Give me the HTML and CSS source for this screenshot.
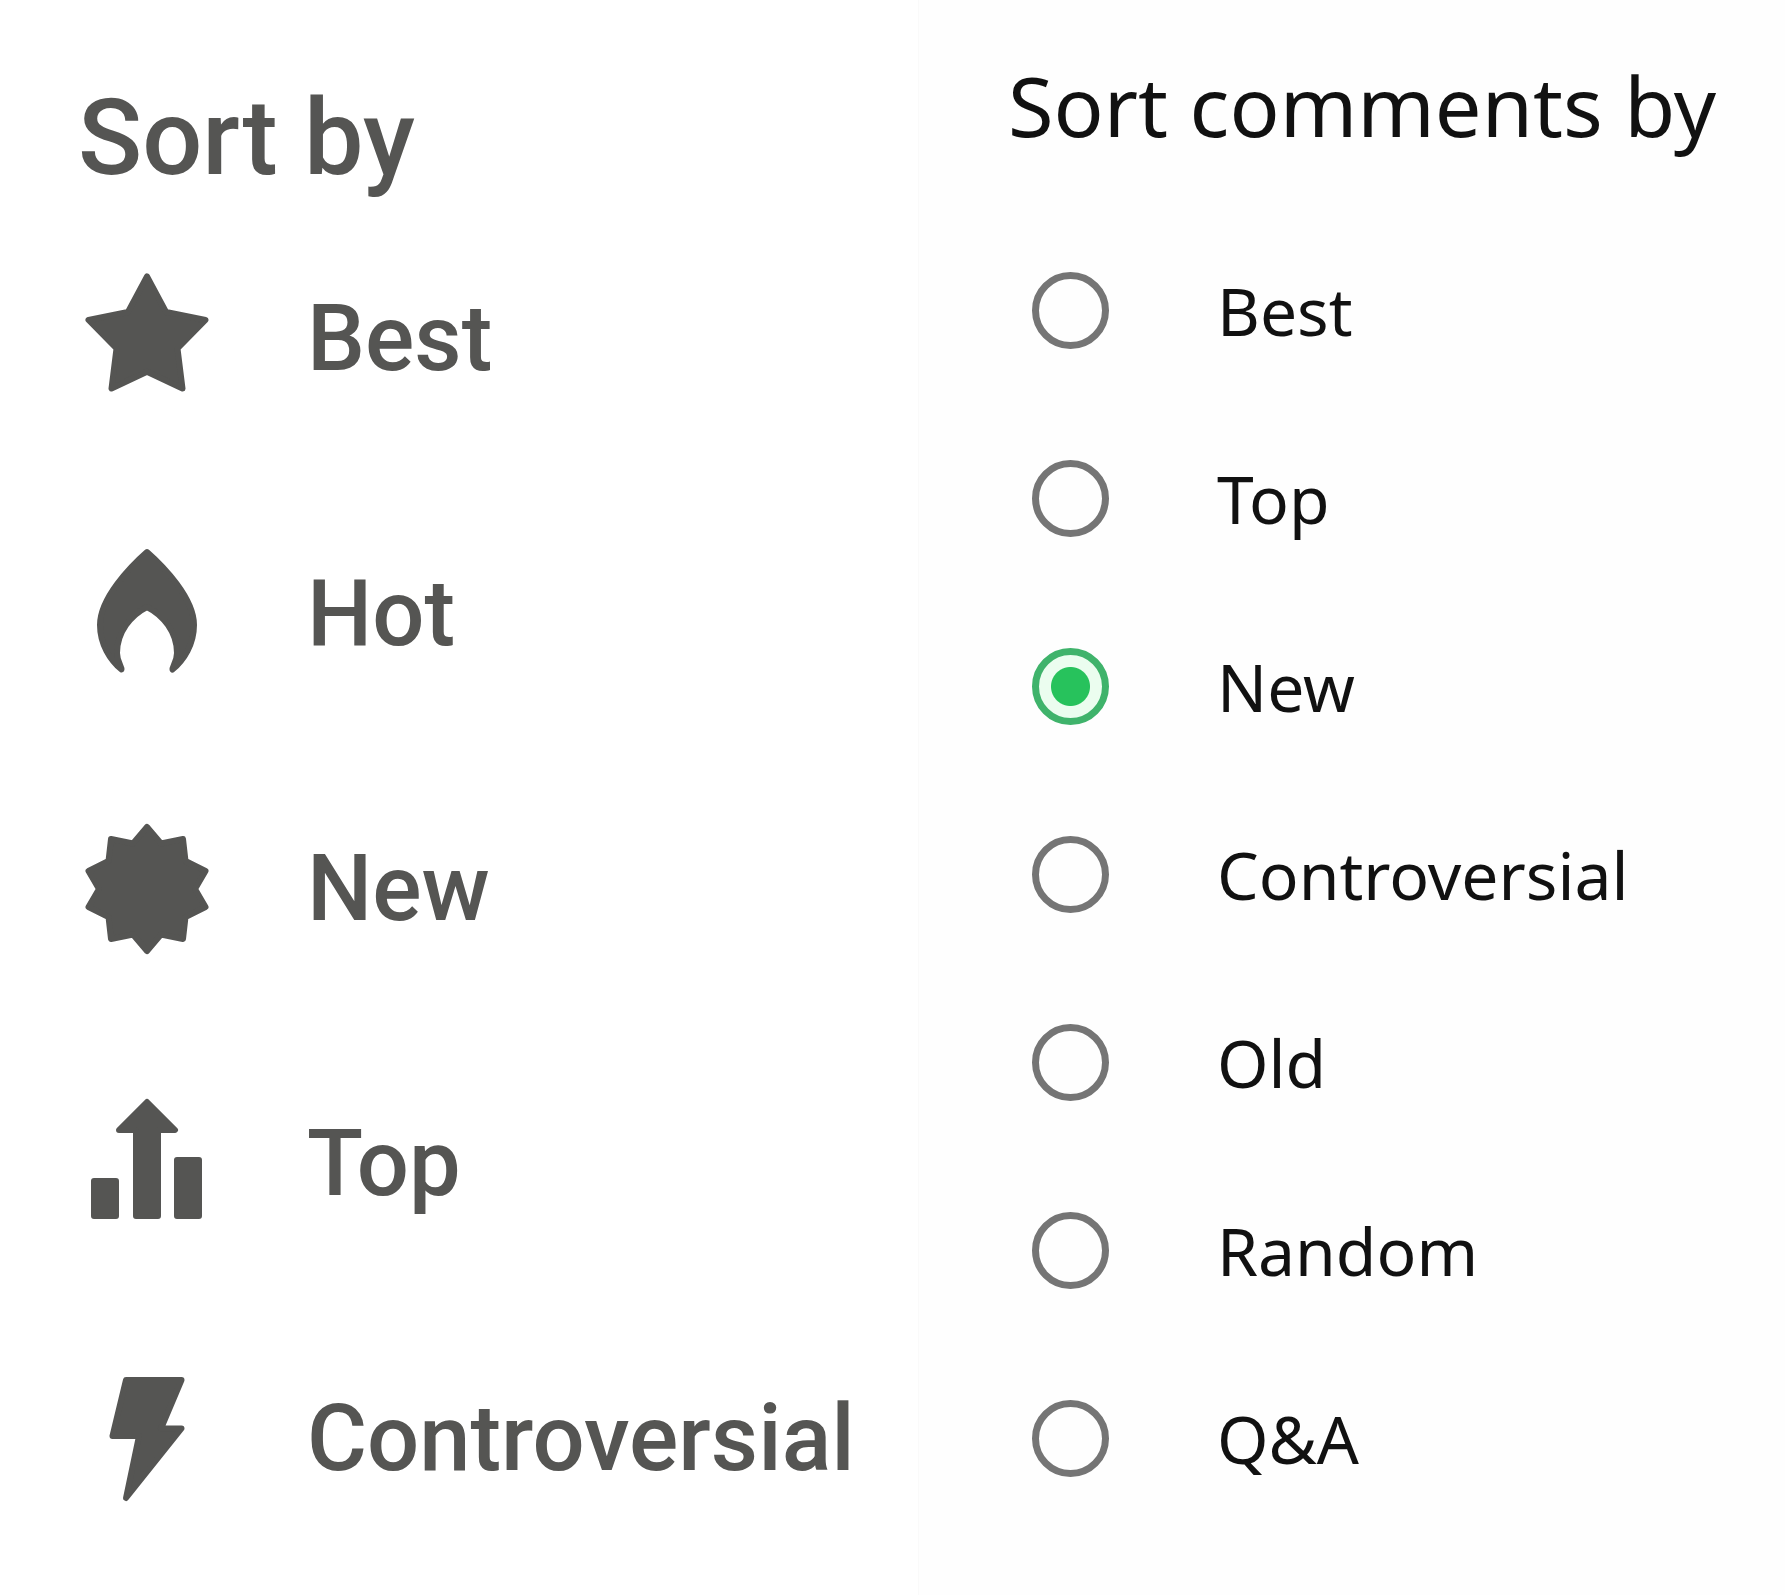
FILE: index.html
```html
<!DOCTYPE html>
<html lang="en">
<head>
  <meta charset="UTF-8" />
  <meta name="viewport" content="width=device-width, initial-scale=1.0"/>
  <title>Sort options</title>
  <link rel="stylesheet" href="styles.css">
</head>
<body>

  <section class="panel posts">
    <h2>Sort by</h2>
    <ul>
      <li>
        <button type="button">
          <svg class="icon" viewBox="0 0 132 132" aria-hidden="true">
            <path d="M66 3.5 85 39 124.5 47 96.5 75.5 101.5 115.5 66 98.7 30.5 115.5 35.5 75.5 7.5 47 47 39Z"/>
          </svg>
          Best
        </button>
      </li>
      <li>
        <button type="button">
          <svg class="icon" viewBox="0 0 132 132" aria-hidden="true">
            <path d="M66 4C82 18 113 50 113 77C113 96 103 112 91.5 121.5C91 119 96 114 96 105C96 84 82 67 66 59C50 67 36 84 36 105C36 114 41 119 40.5 121.5C29 112 19 96 19 77C19 50 50 18 66 4Z"/>
          </svg>
          Hot
        </button>
      </li>
      <li>
        <button type="button">
          <svg class="icon" viewBox="0 0 132 132" aria-hidden="true">
            <path d="M66 4 80 20.5 102 16 104.5 38 124.5 48 114 66 124.5 84 104.5 94 102 116 80 111.5 66 128 52 111.5 30 116 27.5 94 7.5 84 18 66 7.5 48 27.5 38 30 16 52 20.5Z"/>
          </svg>
          New
        </button>
      </li>
      <li>
        <button type="button">
          <svg class="icon" viewBox="0 0 132 132" aria-hidden="true">
            <path d="M13 83H35V118H13ZM96 62H118V118H96ZM66 4 94 32H77V118H55V32H38Z"/>
          </svg>
          Top
        </button>
      </li>
      <li>
        <button type="button">
          <svg class="icon" viewBox="0 0 132 132" aria-hidden="true">
            <path d="M45 7H100.5L80 55.5H100.5L45 125L58 63H31.5Z"/>
          </svg>
          Controversial
        </button>
      </li>
    </ul>
  </section>

  <form class="panel comments">
    <h2 id="comments-title">Sort comments by</h2>
    <div class="options" role="radiogroup" aria-labelledby="comments-title">
      <label><input type="radio" name="sort" value="best">Best</label>
      <label><input type="radio" name="sort" value="top">Top</label>
      <label><input type="radio" name="sort" value="new" checked>New</label>
      <label><input type="radio" name="sort" value="controversial">Controversial</label>
      <label><input type="radio" name="sort" value="old">Old</label>
      <label><input type="radio" name="sort" value="random">Random</label>
      <label><input type="radio" name="sort" value="qa">Q&amp;A</label>
    </div>
  </form>

</body>
</html>
```

FILE: styles.css
```css
* {
  box-sizing: border-box;
}
body {
  margin: 0;
  min-height: 100vh;
  display: grid;
  grid-template-columns: 918fr 867fr;
  background: #fff;
}
h2, ul {
  margin: 0;
  padding: 0;
}

/* post sorting */
.posts {
  padding-top: 78px;
  color: #555553;
  font-family: Roboto, sans-serif;
}
.posts h2 {
  padding-left: 78px;
  margin-bottom: 3px;
  font-size: 106px;
  font-weight: 500;
  line-height: 120px;
}
.posts ul {
  list-style: none;
}
.posts button {
  display: flex;
  align-items: center;
  gap: 94px;
  width: 100%;
  height: 275px;
  padding: 0 0 0 81px;
  border: 0;
  background: none;
  color: inherit;
  font-family: inherit;
  font-size: 92px;
  font-weight: 500;
  cursor: pointer;
}
.icon {
  width: 132px;
  height: 132px;
  flex-shrink: 0;
  fill: currentColor;
  stroke: currentColor;
  stroke-width: 6;
  stroke-linejoin: round;
}

/* comment sorting */
.comments {
  padding-top: 49px;
  border-left: 1px solid #fafafa;
  background: #fefefe;
  color: #111;
  font-family: "Noto Sans", sans-serif;
}
.comments h2 {
  padding-left: 89px;
  margin-bottom: 55px;
  font-size: 83px;
  font-weight: 400;
  line-height: 112px;
}
.options label {
  display: flex;
  align-items: center;
  gap: 108px;
  height: 188px;
  padding-left: 113px;
  font-size: 66px;
  cursor: pointer;
}
.options input {
  appearance: none;
  flex-shrink: 0;
  width: 77px;
  height: 77px;
  margin: 0;
  border: 7px solid #757575;
  border-radius: 50%;
}
.options input:checked {
  border-color: #3fb36b;
  background: radial-gradient(circle, #27c25c 19px, #ebfdef 20px);
}
```
